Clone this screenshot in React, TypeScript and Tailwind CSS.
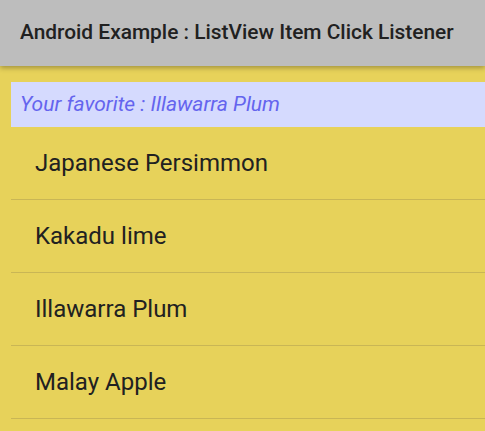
import React from "react";

const items = ["Japanese Persimmon", "Kakadu lime", "Illawarra Plum", "Malay Apple"];

export default function App() {
  return (
    <div className="w-[485px] h-[431px] overflow-hidden bg-[#e7d25a] flex flex-col" style={{ fontFamily: "Roboto, 'Noto Sans', sans-serif" }}>
      <div className="relative z-10 h-[66px] shrink-0 bg-[#bdbdbd] flex items-center pl-[20px] shadow-[0_2px_5px_rgba(0,0,0,0.3)]">
        <span className="text-[20.9px] font-medium text-[#212121]">Android Example : ListView Item Click Listener</span>
      </div>
      <div className="mt-[16px] ml-[11px] h-[45px] shrink-0 bg-[#d5dafe] flex items-center pl-[9px]">
        <span className="text-[21px] italic text-[#6464ee]">Your favorite : Illawarra Plum</span>
      </div>
      <div className="ml-[11px] flex flex-col">
        {items.map((it) => (
          <div key={it} className="h-[73px] shrink-0 flex items-center pl-[24px] border-b border-[#c9b655]">
            <span className="text-[24px] text-[#212121]">{it}</span>
          </div>
        ))}
      </div>
    </div>
  );
}
